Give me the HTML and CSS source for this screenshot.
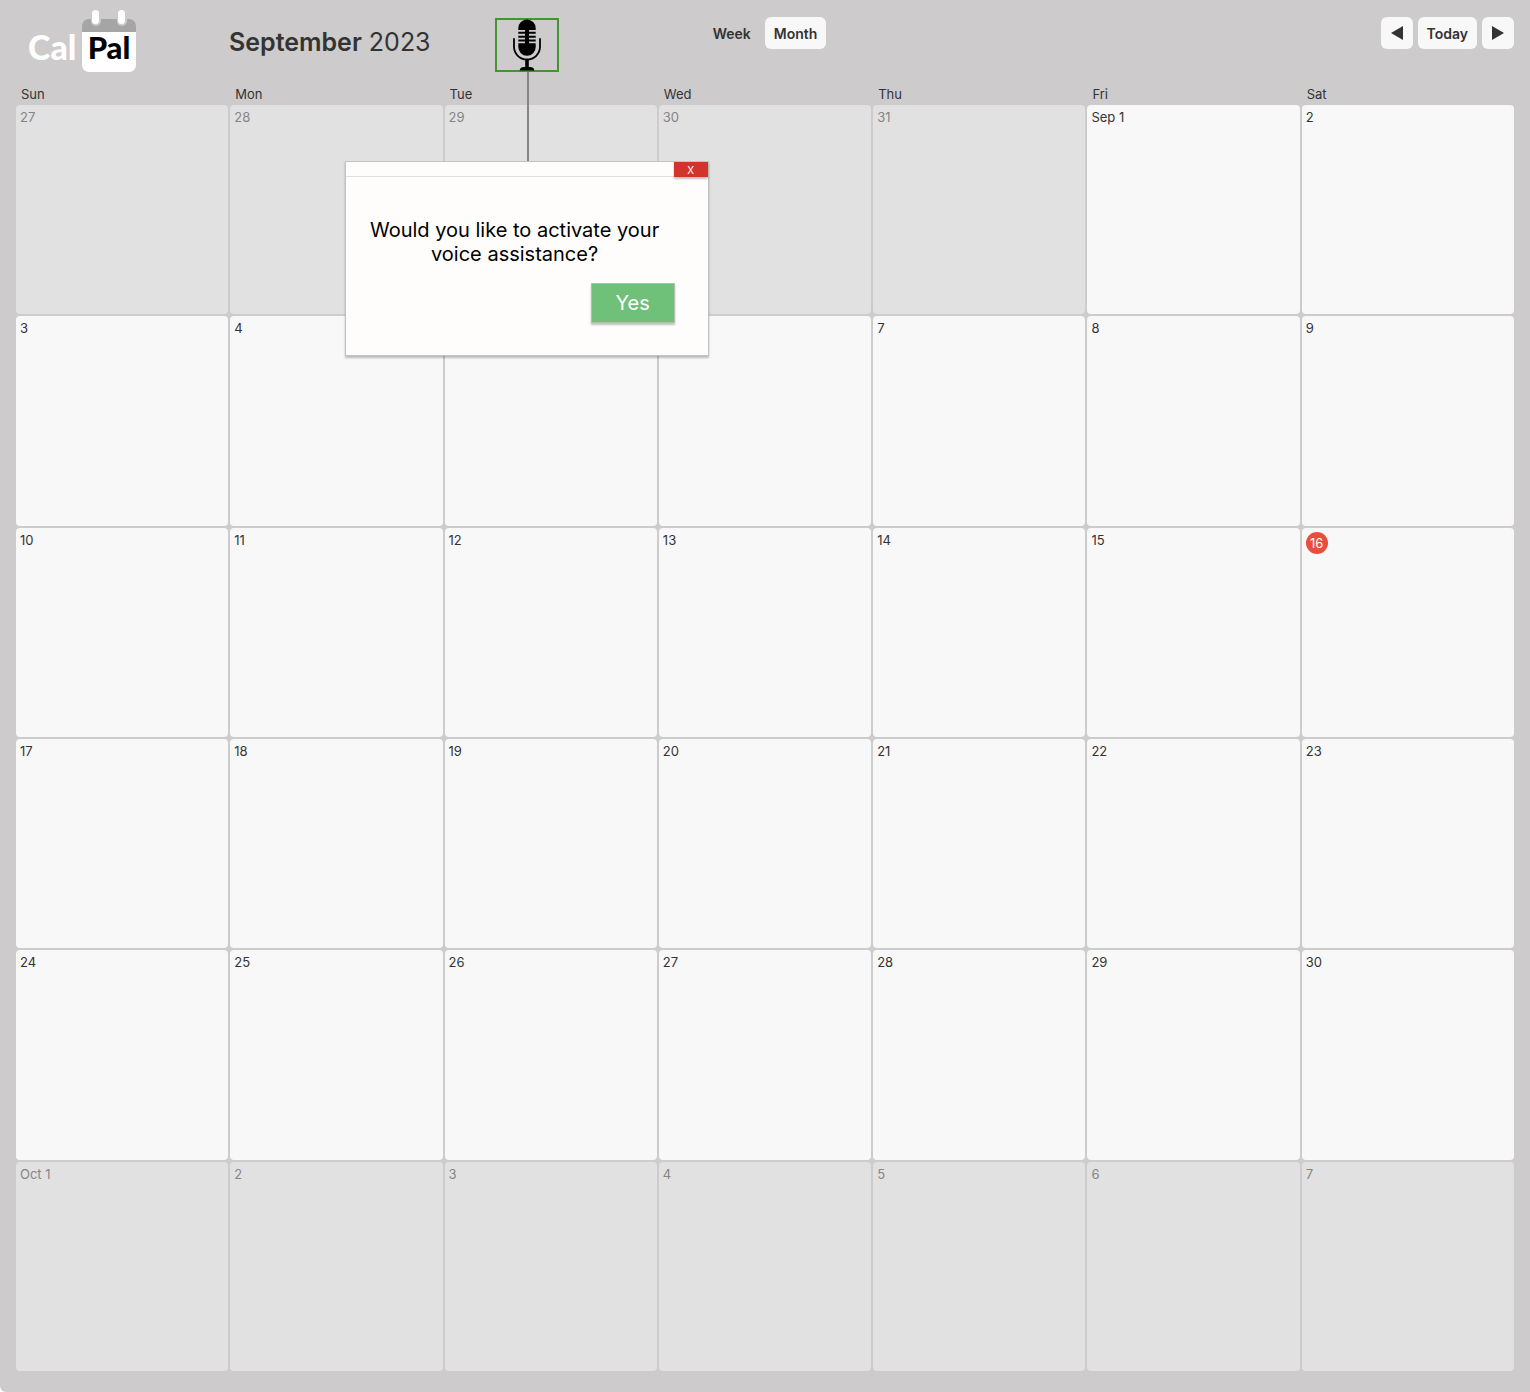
FILE: index.html
```html
<!DOCTYPE html>
<html lang="en">
<head>
  <meta charset="UTF-8" />
  <meta name="viewport" content="width=device-width, initial-scale=1" />
  <title>CalPal - September 2023</title>
  <link rel="stylesheet" href="styles.css">
</head>
<body>
  <div class="app">

    <!-- Top bar -->
    <header class="topbar">
      <div class="topbar-left">
        <div class="logo">
          <span class="logo-cal">Cal</span>
          <span class="logo-pal">
            <svg class="logo-page" viewBox="0 0 54 62" aria-hidden="true">
              <path d="M0 28h54v27a7 7 0 0 1-7 7H7a7 7 0 0 1-7-7z" fill="#fff" />
              <path d="M7 9h2v2a5 5 0 0 0 10 0V9h16v2a5 5 0 0 0 10 0V9h2a7 7 0 0 1 7 7v6H0v-6a7 7 0 0 1 7-7z" fill="#a5a5a5" />
              <path d="M0 22h54v7H0z" fill="#fff" />
              <rect x="10" y="0" width="7" height="14" rx="3.5" fill="#fff" />
              <rect x="36" y="0" width="7" height="14" rx="3.5" fill="#fff" />
            </svg>
            <span class="logo-text">Pal</span>
          </span>
        </div>

        <h1 class="title"><strong>September</strong> 2023</h1>

        <div class="voice">
          <button class="mic-btn" aria-label="Voice assistance">
            <svg viewBox="0 0 30 52" width="30" height="52" aria-hidden="true">
              <path d="M6.3 11V9.2a8.7 8.7 0 0 1 17.4 0V11z" />
              <path d="M6.3 24.3h17.4v3.7a8.7 8.7 0 0 1-17.4 0z" />
              <path d="M13 10h4v16h-4z" />
              <path d="M6.3 12.8h17.4v2H6.3zM6.3 16.8h17.4v2H6.3zM6.3 20.6h17.4v2H6.3z" />
              <path d="M2 19.3v8.5a13 12.7 0 0 0 26 0v-8.5" fill="none" stroke="#000" stroke-width="1.8" />
              <path d="M13.2 40h3.6v9h-3.6z" />
              <path d="M7.7 51.5c0-2.5 2-3.5 4.3-3.5h6c2.300 0 4.300 1 4.300 3.500z" />
            </svg>
          </button>
          <div class="connector"></div>

          <!-- Voice prompt -->
          <div class="dialog" role="dialog" aria-labelledby="dialog-text">
            <div class="dialog-bar">
              <button class="close-btn" aria-label="Close">X</button>
            </div>
            <div class="dialog-body">
              <p class="dialog-text" id="dialog-text">Would you like to activate your voice assistance?</p>
              <button class="yes-btn">Yes</button>
            </div>
          </div>
        </div>
      </div>

      <div class="view-switch">
        <button class="btn btn-plain">Week</button>
        <button class="btn">Month</button>
      </div>

      <div class="date-nav">
        <button class="btn btn-arrow" aria-label="Previous month">
          <svg viewBox="0 0 12 14" width="12" height="14"><path d="M12 0v14L0 7z" /></svg>
        </button>
        <button class="btn">Today</button>
        <button class="btn btn-arrow" aria-label="Next month">
          <svg viewBox="0 0 12 14" width="12" height="14"><path d="M0 0v14l12-7z" /></svg>
        </button>
      </div>
    </header>

    <!-- Month grid -->
    <table class="calendar">
      <thead>
        <tr><th>Sun</th><th>Mon</th><th>Tue</th><th>Wed</th><th>Thu</th><th>Fri</th><th>Sat</th></tr>
      </thead>
      <tbody>
        <tr>
          <td class="other">27</td><td class="other">28</td><td class="other">29</td><td class="other">30</td><td class="other">31</td><td>Sep 1</td><td>2</td>
        </tr>
        <tr>
          <td>3</td><td>4</td><td>5</td><td>6</td><td>7</td><td>8</td><td>9</td>
        </tr>
        <tr>
          <td>10</td><td>11</td><td>12</td><td>13</td><td>14</td><td>15</td><td><span class="today">16</span></td>
        </tr>
        <tr>
          <td>17</td><td>18</td><td>19</td><td>20</td><td>21</td><td>22</td><td>23</td>
        </tr>
        <tr>
          <td>24</td><td>25</td><td>26</td><td>27</td><td>28</td><td>29</td><td>30</td>
        </tr>
        <tr>
          <td class="other">Oct 1</td><td class="other">2</td><td class="other">3</td><td class="other">4</td><td class="other">5</td><td class="other">6</td><td class="other">7</td>
        </tr>
      </tbody>
    </table>

  </div>
</body>
</html>
```
FILE: styles.css
```css
* {
  box-sizing: border-box;
}

body {
  margin: 0;
  background: #fff;
  color: #333;
  font-family: Inter, 'Liberation Sans', sans-serif;
  font-size: 14px;
}

button {
  font-family: inherit;
  border: none;
  padding: 0;
  cursor: pointer;
}

.app {
  display: flex;
  flex-direction: column;
  min-height: 100vh;
  padding: 10px 16px 21px;
  background: #cdcbcc;
  border-bottom-left-radius: 6px;
}

/* Top bar */
.topbar {
  display: grid;
  grid-template-columns: 1fr auto 1fr;
  margin-bottom: 12px;
}

.topbar-left {
  display: flex;
  align-items: center;
  height: 62px;
  padding-left: 12px;
}

.logo {
  display: flex;
  gap: 5px;
  margin-right: 93px;
  font-family: Lato, sans-serif;
  font-size: 31px;
  font-weight: 900;
  line-height: 36px;
}

.logo-cal {
  width: 49px;
  padding-top: 19px;
  color: #fff;
  font-size: 34px;
}

.logo-pal {
  display: grid;
  width: 54px;
  height: 62px;
  color: #000;
}

.logo-page,
.logo-text {
  grid-area: 1 / 1;
}

.logo-text {
  padding-top: 19px;
  text-align: center;
}

.title {
  margin: 0;
  padding-top: 2px;
  font-size: 25px;
  font-weight: 400;
  line-height: 32px;
  white-space: nowrap;
}

.title strong {
  font-weight: 600;
}

.voice {
  position: relative;
  align-self: flex-end;
  margin-left: 64px;
}

.mic-btn {
  display: flex;
  justify-content: center;
  align-items: center;
  width: 64px;
  height: 54px;
  background: none;
  border: 2px solid #43952f;
}

.connector {
  position: absolute;
  top: 54px;
  left: 32px;
  width: 2px;
  height: 90px;
  background: #858585;
}

.view-switch,
.date-nav {
  display: flex;
  align-items: flex-start;
  gap: 5px;
  padding-top: 7px;
}

.date-nav {
  justify-content: flex-end;
}

.btn {
  height: 32px;
  padding: 0 9px;
  background: #f8f8f8;
  border-radius: 6px;
  color: #333;
  font-size: 14px;
  font-weight: 600;
}

.btn-plain {
  background: none;
}

.btn-arrow {
  display: flex;
  justify-content: center;
  align-items: center;
  width: 32px;
  fill: #333;
}

/* Voice prompt */
.dialog {
  position: absolute;
  top: 143px;
  left: 50%;
  width: 364px;
  transform: translateX(-50%);
  background: #fefdfc;
  border: 1px solid #c4c3c3;
  box-shadow: 0 2px 2px rgba(0, 0, 0, 0.25);
  color: #000;
}

.dialog-bar {
  display: flex;
  justify-content: flex-end;
  height: 15px;
  border-bottom: 1px solid #e0e0e0;
}

.close-btn {
  width: 34px;
  height: 15px;
  background: #d2342b;
  box-shadow: 0 2px 2px rgba(0, 0, 0, 0.25);
  color: #fff;
  font-size: 10px;
}

.dialog-body {
  display: flex;
  flex-direction: column;
  align-items: flex-end;
  padding: 41px 33px 32px 9px;
}

.dialog-text {
  width: 100%;
  margin: 0 0 17px;
  font-size: 20px;
  font-weight: 400;
  line-height: 24px;
  text-align: center;
}

.yes-btn {
  width: 84px;
  height: 40px;
  background: #6fc079;
  border: 1px solid #b5bdb5;
  box-shadow: 0 2px 2px rgba(0, 0, 0, 0.25);
  color: #fff;
  font-size: 20px;
}

/* Month grid */
.calendar {
  flex: 1;
  display: grid;
  grid-template-columns: repeat(7, 1fr);
  grid-template-rows: 19px repeat(6, 1fr);
  gap: 2px;
}

.calendar thead,
.calendar tbody,
.calendar tr {
  display: contents;
}

.calendar th {
  padding: 0 5px;
  font-size: 13px;
  font-weight: 400;
  line-height: 20px;
  text-align: left;
}

.calendar td {
  padding: 2px 4px;
  background: #f8f8f8;
  border-radius: 4px;
  font-size: 13px;
  line-height: 20px;
}

.calendar .other {
  background: #e1e1e1;
  color: #858585;
}

.today {
  display: block;
  width: 22px;
  height: 22px;
  margin-top: 2px;
  background: #eb4d3d;
  border-radius: 50%;
  color: #fff;
  line-height: 22px;
  text-align: center;
}
```
